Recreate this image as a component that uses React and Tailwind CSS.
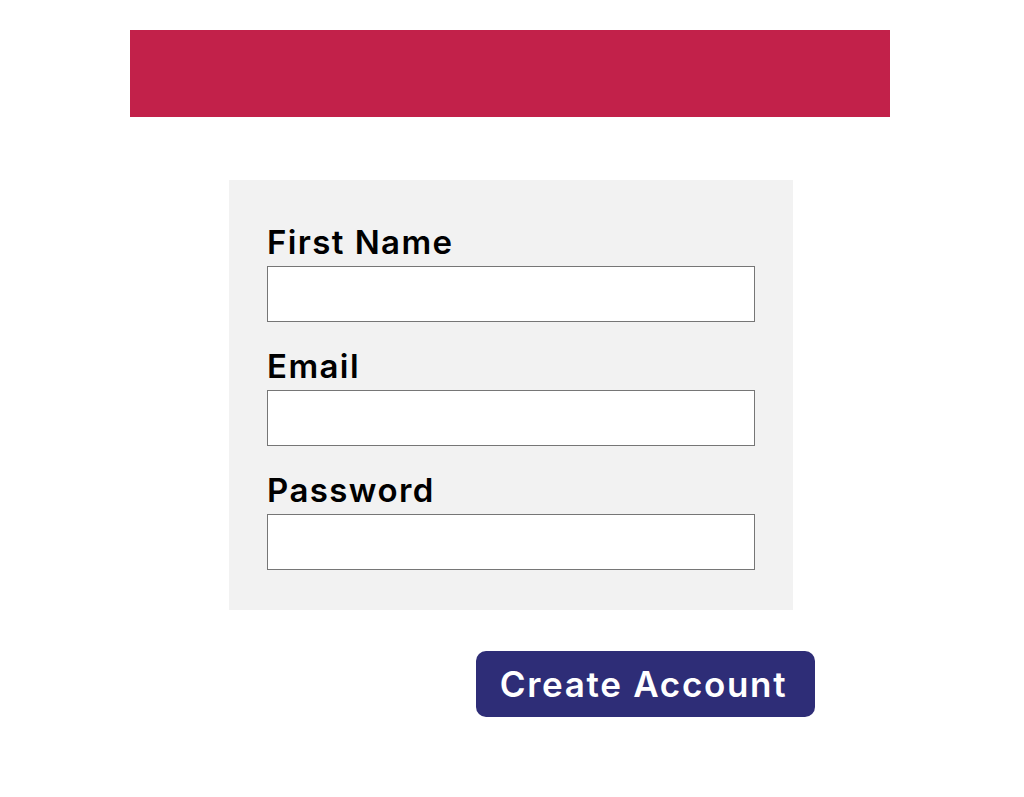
import { useState } from "react";

// signup form: red banner, grey card with three fields, submit button
function Field({ label, type, value, onChange }) {
  return (
    <label className="flex flex-col">
      <span className="mb-[4px] text-[33px] leading-[40px] font-semibold tracking-[1.4px] text-black">{label}</span>
      <input
        type={type}
        value={value}
        onChange={onChange}
        className="h-[56px] w-full border border-[#767676] bg-white px-3 text-[20px] outline-none"
      />
    </label>
  );
}

export default function App() {
  const [form, setForm] = useState({ name: "", email: "", password: "" });
  const set = (k) => (e) => setForm({ ...form, [k]: e.target.value });

  return (
    <div className="min-h-[797px] w-[1024px] bg-white pt-[30px]" style={{ fontFamily: "Inter, 'Noto Sans', sans-serif" }}>
      <div className="ml-[130px] h-[87px] w-[760px] bg-[#c2214a]" />

      <form
        className="ml-[229px] mt-[63px] flex w-[564px] flex-col gap-[24px] bg-[#f2f2f2] px-[38px] pt-[42px] pb-[40px]"
        onSubmit={(e) => e.preventDefault()}
      >
        <Field label="First Name" type="text" value={form.name} onChange={set("name")} />
        <Field label="Email" type="email" value={form.email} onChange={set("email")} />
        <Field label="Password" type="password" value={form.password} onChange={set("password")} />
      </form>

      <button
        type="button"
        className="ml-[476px] mt-[41px] flex h-[66px] w-[339px] items-center justify-center rounded-[10px] bg-[#2e2d77] pr-[4px] text-[35px] font-semibold tracking-[1.7px] text-white"
      >
        Create Account
      </button>
    </div>
  );
}
